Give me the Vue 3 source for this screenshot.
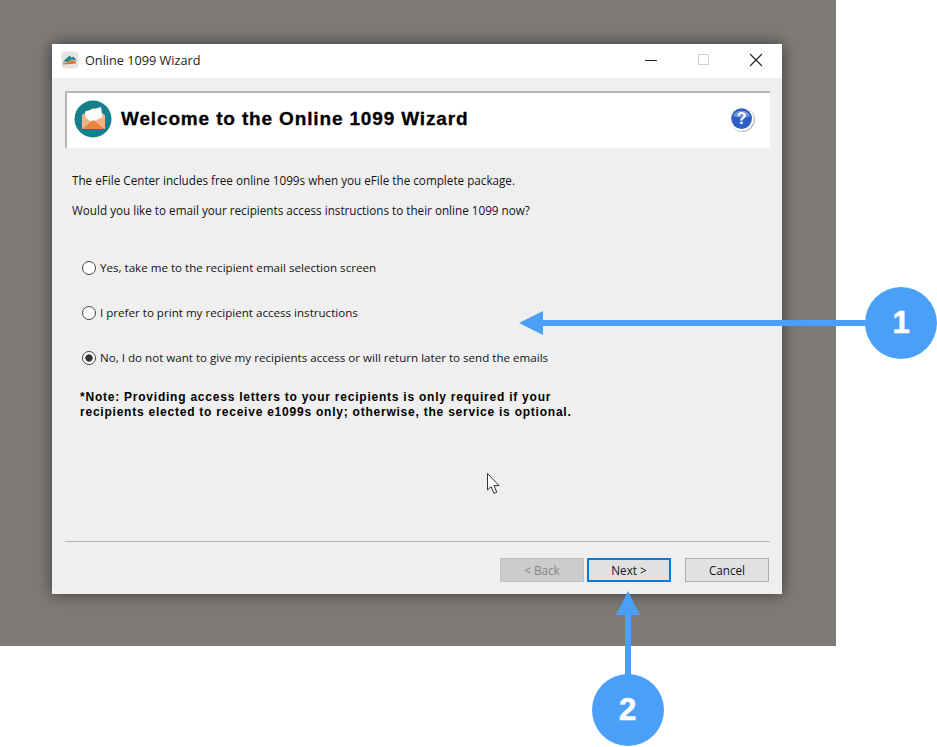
<script setup>
const options = [
  { text: 'Yes, take me to the recipient email selection screen', checked: false },
  { text: 'I prefer to print my recipient access instructions', checked: false },
  { text: 'No, I do not want to give my recipients access or will return later to send the emails', checked: true },
]
</script>

<template>
  <div class="page">
    <div class="stage">
      <div class="window">
        <div class="titlebar">
          <svg class="app-icon" width="18" height="18" viewBox="0 0 18 18">
            <rect x="0.5" y="0.5" width="17" height="17" rx="3.5" fill="#e6e4e0" />
            <path d="M2 10.5 L8.5 4.5 L10.5 6.5 L12.5 5.5 L16 10 L11 8.5 L7 11 Z" fill="#1f8a94" />
            <path d="M2 12 L8 11 L11 9 L15 11 L15 12.5 L2 13.5 Z" fill="#e2702a" />
          </svg>
          <span class="title">Online 1099 Wizard</span>
          <div class="controls">
            <svg width="14" height="14" viewBox="0 0 14 14"><path d="M1 7.5H13" stroke="#222" stroke-width="1" /></svg>
            <svg width="14" height="14" viewBox="0 0 14 14"><rect x="1.5" y="1.5" width="10" height="10" fill="none" stroke="#cfcfcf" /></svg>
            <svg width="14" height="14" viewBox="0 0 14 14"><path d="M1 1L13 13M13 1L1 13" stroke="#222" stroke-width="1.1" /></svg>
          </div>
        </div>
        <div class="body">
          <div class="banner">
            <svg width="38" height="38" viewBox="0 0 38 38">
              <circle cx="19" cy="19" r="18.5" fill="#148089" />
              <path d="M8 15 L19 8 L31 15 V29 H8 Z" fill="#f4b487" />
              <path d="M11 11.5 L27 7 L28.5 17 L18 22 L12 18 Z" fill="#fbfbfb" />
              <path d="M8 29 L19 20 L31 29 Z" fill="#ec8440" />
            </svg>
            <h1>Welcome to the Online 1099 Wizard</h1>
            <svg class="help" width="28" height="28" viewBox="0 0 28 28">
              <circle cx="14.6" cy="14.6" r="12.4" fill="#8b8b8b" opacity=".55" />
              <circle cx="13.6" cy="13.6" r="12.2" fill="#fff" />
              <circle cx="13.6" cy="13.6" r="10.4" fill="#2f5fc4" />
              <path d="M5 11 A9 8 0 0 1 22 11 Q13 14 5 11 Z" fill="#6f95dd" />
              <text x="13.6" y="19" text-anchor="middle" class="help-mark">?</text>
            </svg>
          </div>
          <p class="intro first">The eFile Center includes free online 1099s when you eFile the complete package.</p>
          <p class="intro second">Would you like to email your recipients access instructions to their online 1099 now?</p>
          <div class="options">
            <label v-for="o in options" :key="o.text" class="option">
              <span class="radio" :class="{ on: o.checked }"></span>
              <span>{{ o.text }}</span>
            </label>
          </div>
          <p class="note">*Note: Providing access letters to your recipients is only required if your<br />recipients elected to receive e1099s only; otherwise, the service is optional.</p>
          <div class="footer">
            <div class="buttons">
              <button class="btn disabled">&lt; Back</button>
              <button class="btn focus">Next &gt;</button>
              <button class="btn cancel">Cancel</button>
            </div>
          </div>
        </div>
      </div>
    </div>

    <svg class="cursor" width="16" height="24" viewBox="0 0 16 24">
      <path d="M1.5 1.5 V18 L5.2 14.6 L8 21.5 L10.8 20.2 L8 13.6 H13 Z" fill="#fff" stroke="#333" stroke-width="1" />
    </svg>

    <svg class="arrow-layer" width="937" height="747" viewBox="0 0 937 747">
      <path d="M543 323 H870" stroke="#4aa0f8" stroke-width="6" />
      <path d="M519 323 L543 311 V335 Z" fill="#4aa0f8" />
      <path d="M628 612 V680" stroke="#4aa0f8" stroke-width="6" />
      <path d="M628 591 L616 615 H640 Z" fill="#4aa0f8" />
    </svg>
    <div class="badge one">1</div>
    <div class="badge two">2</div>
  </div>
</template>

<style>
html, body { margin: 0; background: #fff; }
</style>

<style scoped>
.page {
  position: relative;
  width: 937px;
  height: 747px;
  overflow: hidden;
  background: #fff;
  font-family: "Open Sans", "Liberation Sans", sans-serif;
  color: #141414;
}
.stage {
  width: 836px;
  height: 646px;
  box-sizing: border-box;
  padding: 44px 0 0 52px;
  background: #7e7a76;
}
.window {
  width: 730px;
  height: 550px;
  display: flex;
  flex-direction: column;
  background: #efefef;
  box-shadow: 0 0 14px rgba(0, 0, 0, .55);
}
.titlebar {
  height: 34px;
  box-sizing: border-box;
  flex: none;
  display: flex;
  align-items: center;
  padding: 0 0 2px 9px;
  background: #fff;
}
.app-icon { margin-right: 6px; margin-bottom: 1px; }
.title { font-size: 12.7px; color: #222; }
.controls {
  margin-left: auto;
  display: flex;
  gap: 38.5px;
  padding-right: 19px;
}
.body {
  flex: 1;
  display: flex;
  flex-direction: column;
  padding: 13px 12px 12px 13px;
}
.banner {
  height: 57px;
  box-sizing: border-box;
  flex: none;
  display: flex;
  align-items: center;
  gap: 9px;
  padding: 0 14px 3px 7px;
  background: #fff;
  border-top: 2px solid #b5b5b5;
  border-left: 2px solid #b5b5b5;
}
.banner h1 {
  margin: 0;
  font-family: "Liberation Sans", sans-serif;
  font-size: 19px;
  letter-spacing: .85px;
  font-weight: 700;
  color: #000;
  -webkit-text-stroke: .3px #000;
}
.help { margin-left: auto; }
.help-mark {
  font-family: "Liberation Sans", sans-serif;
  font-size: 16px;
  font-weight: 700;
  fill: #fff;
}
.intro {
  margin: 0 0 0 7px;
  font-size: 11.7px;
  line-height: 15px;
}
.first { margin-top: 25px; }
.second { margin-top: 15px; }
.options {
  display: flex;
  flex-direction: column;
  gap: 30px;
  margin: 42px 0 0 17px;
}
.option {
  display: flex;
  align-items: center;
  gap: 4px;
  height: 15px;
  font-size: 11.6px;
}
.radio {
  width: 14px;
  height: 14px;
  flex: none;
  box-sizing: border-box;
  border: 1px solid #444;
  border-radius: 50%;
  background: #fff;
}
.radio.on {
  background: radial-gradient(circle, #333 0 3.4px, #fff 3.9px);
}
.note {
  margin: 25px 0 0 15px;
  font-family: "Liberation Sans", sans-serif;
  font-size: 12px;
  letter-spacing: .77px;
  font-weight: 700;
  line-height: 15px;
  color: #000;
}
.footer {
  margin-top: auto;
  border-top: 1px solid #b4b4b4;
  padding-top: 16px;
}
.buttons {
  display: flex;
  justify-content: flex-end;
  gap: 3px;
  padding-right: 1px;
}
.btn {
  width: 84px;
  height: 24px;
  box-sizing: border-box;
  border: 1px solid #adadad;
  background: #e1e1e1;
  font-family: "Open Sans", sans-serif;
  font-size: 11.7px;
  color: #141414;
  padding: 0;
}
.disabled { background: #cccccc; border-color: #bfbfbf; color: #838383; }
.focus { border: 2px solid #0a78d7; }
.cancel { margin-left: 11px; }
.cursor { position: absolute; left: 486px; top: 472px; }
.arrow-layer { position: absolute; left: 0; top: 0; pointer-events: none; }
.badge {
  position: absolute;
  width: 72px;
  height: 72px;
  border-radius: 50%;
  background: #4aa0f8;
  color: #fff;
  font-family: "Liberation Sans", sans-serif;
  font-weight: 700;
  font-size: 31px;
  -webkit-text-stroke: .6px #fff;
  display: flex;
  align-items: center;
  justify-content: center;
}
.one { left: 865px; top: 287px; }
.two { left: 591.5px; top: 674px; }
</style>
